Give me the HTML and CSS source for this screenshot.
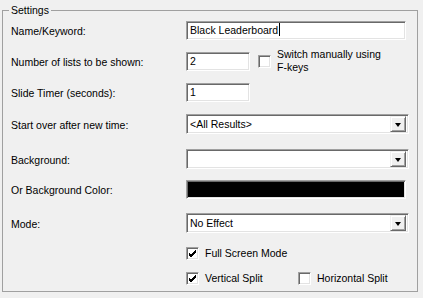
FILE: index.html
```html
<!DOCTYPE html>
<html lang="en">
<head>
    <meta charset="UTF-8">
    <title>Settings</title>
    <link rel="stylesheet" href="styles.css">
</head>
<body>
    <div class="group">
        <span class="group-title">Settings</span>

        <div class="row row-name">
            <label class="label">Name/Keyword:</label>
            <div class="field field-wide">Black Leaderboard<span class="caret"></span></div>
        </div>

        <div class="row row-lists">
            <label class="label">Number of lists to be shown:</label>
            <div class="field field-small">2</div>
            <div class="check check-fkeys">
                <span class="box"></span>
                <span class="check-text">Switch manually using<br>F-keys</span>
            </div>
        </div>

        <div class="row row-timer">
            <label class="label">Slide Timer (seconds):</label>
            <div class="field field-small">1</div>
        </div>

        <div class="row row-start">
            <label class="label">Start over after new time:</label>
            <div class="combo">
                <span class="combo-text">&lt;All Results&gt;</span>
                <span class="drop"><span class="arrow"></span></span>
            </div>
        </div>

        <div class="row row-bg">
            <label class="label">Background:</label>
            <div class="combo">
                <span class="combo-text"></span>
                <span class="drop"><span class="arrow"></span></span>
            </div>
        </div>

        <div class="row row-color">
            <label class="label">Or Background Color:</label>
            <div class="field field-wide swatch"></div>
        </div>

        <div class="row row-mode">
            <label class="label">Mode:</label>
            <div class="combo">
                <span class="combo-text">No Effect</span>
                <span class="drop"><span class="arrow"></span></span>
            </div>
        </div>

        <div class="row row-full">
            <span class="label"></span>
            <div class="check">
                <span class="box checked">
                    <svg width="9" height="9" viewBox="0 0 9 9"><path d="M1 4 L3 6 L8 1 M1 5 L3 7 L8 2 M1 6 L3 8 L8 3" stroke="#000" stroke-width="1" fill="none" shape-rendering="crispEdges"/></svg>
                </span>
                <span class="check-text">Full Screen Mode</span>
            </div>
        </div>

        <div class="row row-split">
            <span class="label"></span>
            <div class="check check-vertical">
                <span class="box checked">
                    <svg width="9" height="9" viewBox="0 0 9 9"><path d="M1 4 L3 6 L8 1 M1 5 L3 7 L8 2 M1 6 L3 8 L8 3" stroke="#000" stroke-width="1" fill="none" shape-rendering="crispEdges"/></svg>
                </span>
                <span class="check-text">Vertical Split</span>
            </div>
            <div class="check">
                <span class="box"></span>
                <span class="check-text">Horizontal Split</span>
            </div>
        </div>
    </div>
</body>
</html>
```

FILE: styles.css
```css
body {
    margin: 0;
    background-color: #f0f0f0;
    font-family: "Liberation Sans", Arial, sans-serif;
    font-size: 10.5px;
    color: #000;
}

.group {
    position: relative;
    box-sizing: border-box;
    width: 416px;
    height: 282px;
    margin: 10px 0 0 2px;
    padding: 9px 0 0 8px;
    border: 1px solid #a0a0a0;
}

.group-title {
    position: absolute;
    top: -7px;
    left: 6px;
    padding: 0 2px;
    line-height: 13px;
    background-color: #f0f0f0;
}

.row {
    display: flex;
    align-items: center;
    height: 20px;
}

.label {
    width: 175px;
    flex-shrink: 0;
    padding-top: 1px;
}

.row-lists { margin-top: 11px; }
.row-timer { margin-top: 11px; }
.row-start { margin-top: 12px; }
.row-bg { margin-top: 15px; }
.row-color { margin-top: 10px; }
.row-mode { margin-top: 14px; }
.row-full { margin-top: 12px; height: 16px; }
.row-split { margin-top: 9px; height: 16px; }

/* sunken text fields */
.field,
.combo,
.box {
    box-sizing: border-box;
    background-color: #fff;
    border: 1px solid;
    border-color: #a0a0a0 #fff #fff #a0a0a0;
    box-shadow: inset 1px 1px 0 #696969, inset -1px -1px 0 #e3e3e3;
}

.field {
    height: 19px;
    padding: 0 0 0 3px;
    line-height: 17px;
    white-space: nowrap;
}

.field-wide { width: 220px; }
.field-small { width: 64px; }

.caret {
    display: inline-block;
    width: 1px;
    height: 13px;
    margin-left: 1px;
    vertical-align: -2px;
    background-color: #000;
}

.swatch {
    background-color: #000;
}

.combo {
    display: flex;
    align-items: center;
    width: 223px;
    height: 20px;
    padding: 2px;
}

.combo-text {
    flex: 1;
    padding-left: 1px;
    line-height: 16px;
}

.drop {
    box-sizing: border-box;
    display: flex;
    align-items: center;
    justify-content: center;
    width: 16px;
    height: 16px;
    background-color: #f0f0f0;
    border: 1px solid;
    border-color: #f0f0f0 #696969 #696969 #f0f0f0;
    box-shadow: inset 1px 1px 0 #fff, inset -1px -1px 0 #a0a0a0;
}

.arrow {
    width: 0;
    height: 0;
    margin-top: 1px;
    border-left: 3.5px solid transparent;
    border-right: 3.5px solid transparent;
    border-top: 4px solid #000;
}

/* checkboxes */
.check {
    display: flex;
    align-items: center;
}

.check-fkeys {
    margin-left: 8px;
}

.check-vertical {
    width: 112px;
}

.box {
    display: flex;
    align-items: center;
    justify-content: center;
    width: 13px;
    height: 13px;
    flex-shrink: 0;
}

.box svg {
    display: block;
}

.check-text {
    margin-left: 6px;
    line-height: 13px;
}
```
